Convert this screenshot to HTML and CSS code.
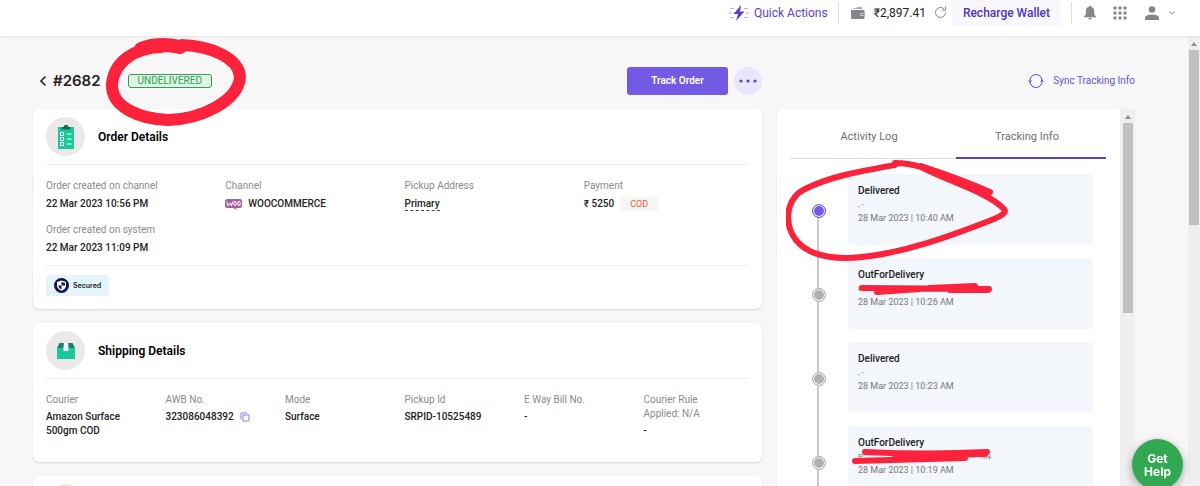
FILE: index.html
```html
<!DOCTYPE html>
<html lang="en">
<head>
    <meta charset="UTF-8">
    <meta name="viewport" content="width=device-width, initial-scale=1.0">
    <title>Order #2682</title>
    <link rel="stylesheet" href="styles.css">
</head>
<body>
    <header class="topbar">
        <a href="#" class="quick">
            <svg width="22" height="18" viewBox="0 0 22 18">
                <path d="M13 1 5.500 10h4.500L8 17 16.500 7.500h-4.500z" fill="#5a3fd0"/>
                <path d="M2 4.500h4M1 9h3M2 13.500h4M16 4.500h4M18 9h3M16 13.500h4" stroke="#b9adf0" stroke-width="1"/>
            </svg>
            Quick Actions
        </a>
        <span class="sep"></span>
        <div class="wallet">
            <svg width="16" height="14" viewBox="0 0 16 14">
                <path d="M1 3 11 .5l1.500 2.500z" fill="#a5a5aa"/>
                <path d="M1 4h12.500q1 0 1 1v2h-4v3h4v2q0 1-1 1H2q-1 0-1-1z" fill="#85858b"/>
                <path d="M11 7.500h4v2h-4z" fill="#85858b"/>
            </svg>
            <span class="amount">₹2,897.41</span>
            <button type="button" class="icon-btn" aria-label="Refresh balance">
                <svg width="13" height="13" viewBox="0 0 13 13" fill="none" stroke="#85858b">
                    <path d="M11.500 6.500a5 5 0 1 1-1.700-3.800"/>
                    <path d="M11.500 .8v3.400H8.200"/>
                </svg>
            </button>
        </div>
        <button type="button" class="recharge">Recharge Wallet</button>
        <span class="sep"></span>
        <div class="tools">
            <button type="button" class="icon-btn" aria-label="Notifications">
                <svg width="14" height="15" viewBox="0 0 14 15" fill="#85858b">
                    <path d="M7 .5q1 0 1 1.200 3.200.8 3.200 4.300v3.500L13 11.500v.8H1v-.8l1.800-2V6Q2.800 2.500 6 1.700 6 .5 7 .5z"/>
                    <path d="M5.300 13h3.400Q8.400 14.500 7 14.500T5.300 13z"/>
                </svg>
            </button>
            <button type="button" class="icon-btn" aria-label="Apps">
                <svg width="14" height="14" viewBox="0 0 14 14" fill="#85858b">
                    <circle cx="2" cy="2" r="1.700"/><circle cx="7" cy="2" r="1.700"/><circle cx="12" cy="2" r="1.700"/>
                    <circle cx="2" cy="7" r="1.700"/><circle cx="7" cy="7" r="1.700"/><circle cx="12" cy="7" r="1.700"/>
                    <circle cx="2" cy="12" r="1.700"/><circle cx="7" cy="12" r="1.700"/><circle cx="12" cy="12" r="1.700"/>
                </svg>
            </button>
            <button type="button" class="icon-btn user" aria-label="Account">
                <svg width="14" height="14" viewBox="0 0 14 14" fill="#85858b">
                    <circle cx="7" cy="3.500" r="3.300"/>
                    <path d="M0 14v-2q0-3.500 7-3.500t7 3.500v2z"/>
                </svg>
                <svg width="8" height="6" viewBox="0 0 8 6" fill="none" stroke="#85858b"><path d="M1 1.500l3 2.500 3-2.500"/></svg>
            </button>
        </div>
    </header>

    <div class="page">
        <main class="content">
            <section class="left">
                <div class="title-row">
                    <a href="#" class="back" aria-label="Back">
                        <svg width="8" height="12" viewBox="0 0 8 12" fill="none" stroke="#222" stroke-width="1.600"><path d="M6.500 1.500 2 6l4.500 4.500"/></svg>
                    </a>
                    <h1>#2682</h1>
                    <span class="status">
                        UNDELIVERED
                        <svg class="mark mark-status" width="144" height="92" viewBox="0 0 144 92" fill="none" stroke="#fa233b" stroke-linecap="round" stroke-linejoin="round">
                            <path d="M57 10C30 11 10 25 8 47C7 71 37 82 64 83C98 82 134 64 136 40C135 21 107 9 78 8" stroke-width="12"/>
                            <path d="M37 12C50 7 62 7 76 10" stroke-width="14"/>
                        </svg>
                    </span>
                    <div class="actions">
                        <button type="button" class="track">Track Order</button>
                        <button type="button" class="more" aria-label="More actions">
                            <svg width="18" height="4" viewBox="0 0 18 4" fill="#5a3fd0"><circle cx="2" cy="2" r="1.600"/><circle cx="9" cy="2" r="1.600"/><circle cx="16" cy="2" r="1.600"/></svg>
                        </button>
                    </div>
                </div>

                <article class="card">
                    <div class="card-head">
                        <span class="circle">
                            <svg width="18" height="26" viewBox="0 0 18 26">
                                <path d="M1 3h16v22H1z" fill="#19c99b"/>
                                <path d="M4.500 5.500v-2.500h2Q7 .8 9 .8t2.500 2.200h2v2.500z" fill="#176b59"/>
                                <path d="M3.500 8.500h3v3h-3zM3.500 13.500h3v3h-3zM3.500 18.500h3v3h-3z" fill="#19c99b" stroke="#fff"/>
                                <path d="M10 10h4.500M10 15h4.500M10 20h4.500" stroke="#a5eeda" stroke-width="1.300"/>
                            </svg>
                        </span>
                        <h2>Order Details</h2>
                    </div>
                    <dl class="fields four">
                        <div>
                            <dt>Order created on channel</dt>
                            <dd>22 Mar 2023 10:56 PM</dd>
                        </div>
                        <div>
                            <dt>Channel</dt>
                            <dd class="inline">
                                <svg width="17" height="11" viewBox="0 0 17 11">
                                    <path d="M2 0h13q2 0 2 2v5q0 2-2 2h-4l1 2-4-2H2Q0 9 0 7V2q0-2 2-2z" fill="#a4649b"/>
                                    <path d="M1.800 2.500 3 7l2-3 1.500 3 1-4.500" fill="none" stroke="#fff"/>
                                    <ellipse cx="10" cy="4.500" rx="1.300" ry="2" fill="none" stroke="#fff"/>
                                    <ellipse cx="14" cy="4.500" rx="1.300" ry="2" fill="none" stroke="#fff"/>
                                </svg>
                                WOOCOMMERCE
                            </dd>
                        </div>
                        <div>
                            <dt>Pickup Address</dt>
                            <dd><span class="dashed">Primary</span></dd>
                        </div>
                        <div>
                            <dt>Payment</dt>
                            <dd class="inline">₹ 5250 <span class="cod">COD</span></dd>
                        </div>
                        <div>
                            <dt>Order created on system</dt>
                            <dd>22 Mar 2023 11:09 PM</dd>
                        </div>
                    </dl>
                    <div class="card-foot">
                        <span class="secured">
                            <svg width="15" height="15" viewBox="0 0 15 15">
                                <circle cx="7.500" cy="7.500" r="7.500" fill="#0e1451"/>
                                <path d="M7.500 2.500 12 4v3.500q0 3.300-4.500 5.300Q3 10.800 3 7.500V4z" fill="#fff"/>
                                <path d="M7.500 4v3.500h3.500V5zM7.500 7.500H4.200q.3 2.400 3.300 4z" fill="#0e1451"/>
                            </svg>
                            Secured
                        </span>
                    </div>
                </article>

                <article class="card">
                    <div class="card-head">
                        <span class="circle">
                            <svg width="20" height="18" viewBox="0 0 20 18">
                                <path d="M1 6h18v11H1z" fill="#19c99b"/>
                                <path d="M3.500 1H8l-.5 5H1zM12 1h4.500L19 6h-6.500z" fill="#168068"/>
                                <path d="M8 1h4l.5 8h-5z" fill="#f4fffc"/>
                            </svg>
                        </span>
                        <h2>Shipping Details</h2>
                    </div>
                    <dl class="fields six">
                        <div>
                            <dt>Courier</dt>
                            <dd>Amazon Surface<br>500gm COD</dd>
                        </div>
                        <div>
                            <dt>AWB No.</dt>
                            <dd class="inline">
                                323086048392
                                <button type="button" class="icon-btn" aria-label="Copy AWB number">
                                    <svg width="10" height="10" viewBox="0 0 10 10" fill="none" stroke="#8f7cea"><path d="M3 3h6v6H3zM1.500 7H1V1h6v.5"/></svg>
                                </button>
                            </dd>
                        </div>
                        <div>
                            <dt>Mode</dt>
                            <dd>Surface</dd>
                        </div>
                        <div>
                            <dt>Pickup Id</dt>
                            <dd>SRPID-10525489</dd>
                        </div>
                        <div>
                            <dt>E Way Bill No.</dt>
                            <dd>-</dd>
                        </div>
                        <div>
                            <dt>Courier Rule<br>Applied: N/A</dt>
                            <dd>-</dd>
                        </div>
                    </dl>
                </article>

                <article class="card">
                    <div class="card-head">
                        <span class="circle"></span>
                    </div>
                </article>
            </section>

            <aside class="right">
                <div class="sync-row">
                    <a href="#" class="sync">
                        <svg width="16" height="14" viewBox="0 0 16 14" fill="none" stroke="#5a3fd0">
                            <path d="M2 7a6 6 0 0 1 12-1M14 7a6 6 0 0 1-12 1"/>
                            <path d="M.5 6.500 2 8l1.500-1.500M12.500 7.500 14 6l1.500 1.500"/>
                        </svg>
                        Sync Tracking Info
                    </a>
                </div>
                <div class="panel">
                    <div class="panel-body">
                        <nav class="tabs">
                            <a href="#">Activity Log</a>
                            <a href="#" class="active">Tracking Info</a>
                        </nav>
                        <ol class="timeline">
                            <li class="current">
                                <div class="event">
                                    <h3>Delivered</h3>
                                    <p>, -</p>
                                    <time>28 Mar 2023 | 10:40 AM</time>
                                </div>
                                <svg class="mark mark-event" width="226" height="104" viewBox="0 0 226 104" fill="none" stroke="#fa233b" stroke-linecap="round" stroke-linejoin="round">
                                    <path d="M109 6C75 12 45 17 19 30C2 38 0 57 4 70C12 93 38 102 76 98C116 94 160 79 208 60Q222 54 218 50C203 34 167 24 135 8Q122 4 109 4" stroke-width="6"/>
                                    <path d="M135 7Q175 20 204 33" stroke-width="6"/>
                                </svg>
                            </li>
                            <li>
                                <div class="event">
                                    <h3>OutForDelivery</h3>
                                    <p class="place"><span>P</span><span>IN</span></p>
                                    <time>28 Mar 2023 | 10:26 AM</time>
                                </div>
                                <svg class="mark mark-place" width="146" height="18" viewBox="0 0 146 18" fill="none" stroke="#fa233b" stroke-linecap="round">
                                    <path d="M12 8 139 9M27 12 70 9M100 10 138 10M80 8 125 6" stroke-width="6"/>
                                </svg>
                            </li>
                            <li>
                                <div class="event">
                                    <h3>Delivered</h3>
                                    <p>, -</p>
                                    <time>28 Mar 2023 | 10:23 AM</time>
                                </div>
                            </li>
                            <li>
                                <div class="event">
                                    <h3>OutForDelivery</h3>
                                    <p class="place"><span>P</span><span>IN</span></p>
                                    <time>28 Mar 2023 | 10:19 AM</time>
                                </div>
                                <svg class="mark mark-place" width="146" height="18" viewBox="0 0 146 18" fill="none" stroke="#fa233b" stroke-linecap="round">
                                    <path d="M15 4Q80 7 137 4M5 13 115 10M45 8 135 6" stroke-width="6"/>
                                </svg>
                            </li>
                        </ol>
                    </div>
                    <div class="scroll scroll-panel"><span class="arrow"></span><span class="thumb"></span></div>
                </div>
            </aside>
        </main>
        <div class="scroll scroll-page"><span class="arrow"></span><span class="thumb"></span></div>
    </div>

    <button type="button" class="help">Get Help</button>
</body>
</html>
```

FILE: styles.css
```css
* {
    box-sizing: border-box;
}
body {
    margin: 0;
    height: 100vh;
    overflow: hidden;
    display: flex;
    flex-direction: column;
    background-color: #f7f7f7;
    color: #222;
    font: 10px/14px Roboto, "Noto Sans", sans-serif;
}
h1, h2, h3, p, dl, dd, ol {
    margin: 0;
    padding: 0;
}
button {
    border: 0;
    padding: 0;
    font: inherit;
    cursor: pointer;
}
a { text-decoration: none; }
svg { display: block; flex: none; }

/* top bar */
.topbar {
    flex: none;
    height: 36px;
    padding: 0 24px 11px;
    display: flex;
    justify-content: flex-end;
    align-items: center;
    background-color: #fff;
    box-shadow: 0 1px 2px #e4e4e6;
    font-size: 12px;
    position: relative;
}
.quick {
    display: flex;
    align-items: center;
    gap: 4px;
    color: #5a3fd0;
}
.sep {
    width: 1px;
    height: 22px;
    margin: 0 11px 0 10px;
    background-color: #dcdce0;
}
.wallet {
    display: flex;
    align-items: center;
    gap: 8px;
    margin-right: 5px;
}
.icon-btn { background: none; }
.recharge {
    align-self: flex-start;
    height: 26px;
    padding: 0 11px;
    background-color: #f8f7fe;
    color: #4c34b8;
    font-weight: 500;
    border-radius: 0 0 3px 3px;
}
.tools {
    display: flex;
    align-items: center;
    gap: 16px;
}
.user {
    display: flex;
    align-items: center;
    gap: 9px;
    margin-left: 2px;
}

/* page */
.page {
    flex: 1;
    min-height: 0;
    display: flex;
    overflow: hidden;
}
.content {
    flex: 1;
    min-width: 0;
    display: grid;
    grid-template-columns: 729fr 358fr;
    gap: 15px;
    padding: 0 53px 0 33px;
}
.left, .right {
    min-width: 0;
    min-height: 0;
    display: flex;
    flex-direction: column;
}
.title-row {
    flex: none;
    height: 73px;
    padding: 16px 0 0 6px;
    display: flex;
    align-items: center;
}
.back { margin-right: 6px; }
h1 {
    font-family: Inter, sans-serif;
    font-size: 15px;
    line-height: 18px;
    font-weight: 600;
}
.status {
    position: relative;
    margin-left: 27px;
    padding: 0 9px;
    border: 1px solid #2f9e54;
    border-radius: 3px;
    background-color: #dff3e5;
    color: #2f9e54;
    line-height: 12px;
}
.actions {
    margin-left: auto;
    display: flex;
    align-items: center;
    gap: 6px;
}
.track {
    width: 101px;
    height: 28px;
    border-radius: 3px;
    background-color: #735ae5;
    color: #fff;
    font-weight: 600;
}
.more {
    width: 28px;
    height: 28px;
    display: grid;
    place-items: center;
    border-radius: 50%;
    background-color: #e9e5fb;
}

/* cards */
.card {
    flex: none;
    margin-bottom: 14px;
    padding: 0 13px 12px;
    border-radius: 6px;
    background-color: #fff;
    box-shadow: 0 1px 2px #d8d8da;
}
.card-head {
    height: 56px;
    display: flex;
    align-items: center;
    gap: 13px;
    border-bottom: 1px solid #efefef;
}
.circle {
    width: 39px;
    height: 39px;
    display: grid;
    place-items: center;
    border-radius: 50%;
    background-color: #ebe8e8;
}
h2 {
    font-size: 12px;
    font-weight: 600;
    color: #000;
}
.fields {
    display: grid;
    gap: 12px 0;
    margin-right: -14px;
}
.four {
    grid-template-columns: repeat(4, 1fr);
    padding: 14px 0 10px;
}
.six {
    grid-template-columns: repeat(6, 1fr);
    padding: 14px 0 12px;
}
dt { color: #8a8a8a; }
dd {
    margin-top: 4px;
    font-weight: 500;
}
.six dd { margin-top: 3px; }
.inline {
    display: flex;
    align-items: center;
    gap: 6px;
}
.dashed {
    padding-bottom: 1px;
    border-bottom: 1px dashed #444;
}
.cod {
    padding: 0 10px;
    background-color: #f6f6f7;
    color: #f0582b;
    font-size: 9px;
    font-weight: 400;
}
.card-foot {
    padding-top: 9px;
    border-top: 1px solid #efefef;
}
.secured {
    display: inline-flex;
    align-items: center;
    gap: 4px;
    height: 21px;
    padding: 0 8px;
    border-radius: 3px;
    background-color: #e3f5f9;
    font-family: Inter, sans-serif;
    font-size: 7px;
    font-weight: 600;
}

/* right column */
.sync-row {
    flex: none;
    height: 73px;
    padding-top: 16px;
    display: flex;
    justify-content: flex-end;
    align-items: center;
}
.sync {
    display: flex;
    align-items: center;
    gap: 9px;
    color: #6a50dc;
}
.panel {
    flex: 1;
    min-height: 0;
    display: flex;
}
.panel-body {
    flex: 1;
    padding: 0 14px 0 13px;
    background-color: #fff;
    border-radius: 6px 0 0 0;
    box-shadow: 0 1px 2px #d8d8da;
}
.tabs {
    display: flex;
    height: 50px;
    border-bottom: 1px solid #dedede;
}
.tabs a {
    flex: 1;
    position: relative;
    padding-top: 5px;
    color: #6d6d72;
    font-size: 11px;
    line-height: 46px;
    text-align: center;
}
.tabs .active::after {
    content: "";
    position: absolute;
    left: 8px;
    right: 0;
    bottom: -1px;
    height: 2px;
    background-color: #5a45b0;
}
.timeline {
    list-style: none;
    padding: 15px 13px 0 58px;
}
.timeline li {
    position: relative;
    padding-bottom: 13px;
}
.event {
    height: 71px;
    padding: 10px 10px 0;
    border-radius: 3px;
    background-color: #f3f6fa;
}
.event p {
    height: 13px;
    font-size: 8px;
    color: #777;
}
.event time {
    display: block;
    font-size: 9px;
    color: #77777c;
}
h3 {
    font-size: 10px;
    line-height: 14px;
    font-weight: 500;
}
.place {
    display: flex;
    justify-content: space-between;
    max-width: 133px;
}
/* connecting line and dot */
.timeline li::before {
    content: "";
    position: absolute;
    left: -31px;
    top: 36px;
    width: 2px;
    height: 100%;
    background-color: #c9c9c9;
}
.timeline li::after {
    content: "";
    position: absolute;
    z-index: 1;
    left: -36px;
    top: 30px;
    width: 12px;
    height: 12px;
    border: 1px solid #b0b0b0;
    border-radius: 50%;
    background-color: #b0b0b0;
    box-shadow: inset 0 0 0 1px #fff;
}
.timeline .current::after {
    border-color: #735ae5;
    background-color: #735ae5;
}

/* scrollbars */
.scroll {
    flex: none;
    display: flex;
    flex-direction: column;
    align-items: center;
    background-color: #efefef;
}
.scroll-panel { width: 15px; }
.scroll-page { width: 12px; }
.arrow {
    margin: 6px 0 4px;
    border: 3px solid transparent;
    border-top: 0;
    border-bottom: 4px solid #8d8d8d;
}
.thumb {
    width: 10px;
    height: 190px;
    background-color: #c0c0c0;
}
.scroll-page .thumb { height: 175px; }

/* hand-drawn marker */
.mark {
    position: absolute;
    z-index: 2;
    pointer-events: none;
}
.mark-status {
    left: -25px;
    top: -38px;
}
.mark-event {
    left: -62px;
    top: -15px;
}
.mark-place {
    left: 2px;
    top: 22px;
}

.help {
    position: fixed;
    z-index: 3;
    right: 17px;
    bottom: -4px;
    width: 51px;
    height: 51px;
    padding: 0 8px;
    border-radius: 50%;
    background-color: #32a852;
    color: #fff;
    font-family: Inter, sans-serif;
    font-size: 12px;
    line-height: 13px;
    font-weight: 700;
    box-shadow: 0 3px 10px rgba(0, 0, 0, .35);
}
```
